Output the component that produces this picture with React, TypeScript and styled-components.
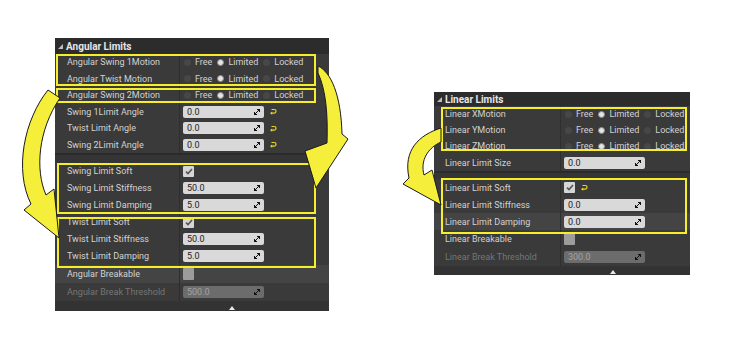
import styled, { createGlobalStyle } from 'styled-components';

const GlobalStyle = createGlobalStyle`
  html, body { margin: 0; padding: 0; background: #ffffff; }
  body { font-family: Roboto, 'Liberation Sans', sans-serif; }
`;

const Page = styled.div`
  position: relative;
  width: 746px;
  height: 346px;
  display: flex;
  align-items: flex-start;
  overflow: hidden;
`;

const Panel = styled.div<{ $top: number; $left: number; $width: number; $labelW: number }>`
  margin: ${(p) => p.$top}px 0 0 ${(p) => p.$left}px;
  width: ${(p) => p.$width}px;
  background: #3a3a3a;
  display: flex;
  flex-direction: column;
  --label-w: ${(p) => p.$labelW}px;
`;

const Header = styled.div<{ $h: number }>`
  height: ${(p) => p.$h}px;
  background: #2c2c2c;
  color: #e6e6e6;
  font-size: 10px;
  font-weight: 700;
  display: flex;
  align-items: center;
  gap: 3px;
  padding-left: 3px;
`;

const Caret = styled.span`
  width: 0;
  height: 0;
  border-left: 5px solid transparent;
  border-bottom: 5px solid #bdbdbd;
  margin-top: 1px;
`;

// yellow annotation box drawn over a group of rows
const Group = styled.div<{ $inset: string }>`
  position: relative;
  &::after {
    content: '';
    position: absolute;
    inset: ${(p) => p.$inset};
    border: 2px solid #f5ee2c;
    pointer-events: none;
    z-index: 2;
  }
`;

const Row = styled.div<{ $h: number; $tone?: 'base' | 'light' }>`
  height: ${(p) => p.$h}px;
  display: grid;
  grid-template-columns: var(--label-w) 1fr;
  background: ${(p) => (p.$tone === 'light' ? '#444444' : '#3a3a3a')};
`;

const Label = styled.div<{ $pad: number; $disabled?: boolean }>`
  display: flex;
  align-items: center;
  padding-left: ${(p) => p.$pad}px;
  font-size: 9px;
  color: ${(p) => (p.$disabled ? '#767676' : '#d2d2d2')};
  border-right: 1px solid #2e2e2e;
  white-space: nowrap;
  overflow: hidden;
`;

const Value = styled.div`
  display: flex;
  align-items: center;
  padding-left: 3px;
  gap: 6px;
`;

const NumberBox = styled.div<{ $disabled?: boolean }>`
  width: 81px;
  height: 12px;
  box-sizing: border-box;
  border-radius: 2px;
  background: ${(p) => (p.$disabled ? '#6c6c6c' : '#d9d9d9')};
  color: ${(p) => (p.$disabled ? '#a3a3a3' : '#1e1e1e')};
  font-size: 9px;
  display: flex;
  align-items: center;
  justify-content: space-between;
  padding: 0 4px 0 4px;
`;

const CheckBox = styled.div<{ $empty?: boolean }>`
  width: 11px;
  height: ${(p) => (p.$empty ? 12 : 11)}px;
  border-radius: 1px;
  background: ${(p) => (p.$empty ? '#9c9c9c' : '#d6d6d6')};
  display: flex;
  align-items: center;
  justify-content: center;
`;

const RadioGroup = styled.div`
  display: flex;
  align-items: center;
  padding-left: 1px;
  font-size: 9px;
  color: #d2d2d2;
`;

const RadioOption = styled.div`
  display: flex;
  align-items: center;
  gap: 4px;
  margin-right: 5px;
`;

const Dot = styled.span<{ $on?: boolean }>`
  width: 7px;
  height: 7px;
  border-radius: 50%;
  box-sizing: border-box;
  background: ${(p) => (p.$on ? '#e4e4e4' : '#474747')};
  border: ${(p) => (p.$on ? '1px solid #8a8a8a' : 'none')};
`;

const Separator = styled.div<{ $h: number }>`
  height: ${(p) => p.$h}px;
  background: #353535;
  border-top: 2px solid #2b2b2b;
  box-sizing: border-box;
`;

const Footer = styled.div<{ $h: number }>`
  height: ${(p) => p.$h}px;
  display: grid;
  grid-template-columns: var(--label-w) 1fr;
  background: #333333;
  align-items: end;
`;

const Notch = styled.span`
  margin-left: 49px;
  width: 0;
  height: 0;
  border-left: 3.5px solid transparent;
  border-right: 3.5px solid transparent;
  border-bottom: 4px solid #e8e8e8;
  margin-bottom: 1px;
`;

const Overlay = styled.svg`
  position: absolute;
  left: 0;
  top: 0;
  pointer-events: none;
  z-index: 3;
`;

const SpinIcon = () => (
  <svg width='6' height='6' viewBox='0 0 6 6'>
    <path d='M3 0H6V3Z M0 3V6H3Z M1.6 4.4L4.4 1.6' stroke='#111' strokeWidth='1' fill='#111' />
  </svg>
);

const ResetIcon = () => (
  <svg width='7' height='7' viewBox='0 0 7 7'>
    <path d='M1.5 1.5H4.2A1.8 1.8 0 0 1 4.2 5.2H1' stroke='#e9d523' strokeWidth='1.2' fill='none' />
    <path d='M0 5.2L2.2 3.6V6.8Z' fill='#e9d523' />
  </svg>
);

const CheckMark = () => (
  <svg width='8' height='7' viewBox='0 0 8 7'>
    <path d='M1 3.6L3 5.6L7 1' stroke='#555' strokeWidth='1.6' fill='none' />
  </svg>
);

type Field =
  | { kind: 'motion'; label: string }
  | { kind: 'number'; label: string; value: string; reset?: boolean; disabled?: boolean }
  | { kind: 'check'; label: string; checked: boolean; reset?: boolean };

const FieldRow = (props: { field: Field; h: number; pad: number; tone?: 'base' | 'light' }) => {
  const { field, h, pad, tone } = props;
  const disabled = field.kind === 'number' && field.disabled;
  return (
    <Row $h={h} $tone={tone}>
      <Label $pad={pad} $disabled={disabled}>
        {field.label}
      </Label>
      <Value>
        {field.kind === 'motion' && (
          <RadioGroup>
            {['Free', 'Limited', 'Locked'].map((opt) => (
              <RadioOption key={opt}>
                <Dot $on={opt === 'Limited'} />
                {opt}
              </RadioOption>
            ))}
          </RadioGroup>
        )}
        {field.kind === 'number' && (
          <>
            <NumberBox $disabled={field.disabled}>
              {field.value}
              <SpinIcon />
            </NumberBox>
            {field.reset && <ResetIcon />}
          </>
        )}
        {field.kind === 'check' && (
          <>
            <CheckBox $empty={!field.checked}>{field.checked && <CheckMark />}</CheckBox>
            {field.reset && <ResetIcon />}
          </>
        )}
      </Value>
    </Row>
  );
};

const App = () => {
  return (
    <Page>
      <GlobalStyle />
      <Panel $top={38} $left={55} $width={274} $labelW={125}>
        <Header $h={16}>
          <Caret />
          Angular Limits
        </Header>
        <Group $inset='0 13px 1px 1px'>
          <FieldRow h={16.5} pad={12} field={{ kind: 'motion', label: 'Angular Swing 1Motion' }} />
          <FieldRow h={16.5} pad={12} field={{ kind: 'motion', label: 'Angular Twist Motion' }} />
        </Group>
        <Group $inset='1px 13px 1px 1px'>
          <FieldRow h={16.5} pad={12} field={{ kind: 'motion', label: 'Angular Swing 2Motion' }} />
        </Group>
        <FieldRow h={16.5} pad={12} field={{ kind: 'number', label: 'Swing 1Limit Angle', value: '0.0', reset: true }} />
        <FieldRow h={16.5} pad={12} field={{ kind: 'number', label: 'Twist Limit Angle', value: '0.0', reset: true }} />
        <FieldRow h={16.5} pad={12} field={{ kind: 'number', label: 'Swing 2Limit Angle', value: '0.0', reset: true }} />
        <Separator $h={9.5} />
        <Group $inset='0 13px 0 2px'>
          <FieldRow h={17} pad={12} field={{ kind: 'check', label: 'Swing Limit Soft', checked: true }} />
          <FieldRow h={17} pad={12} field={{ kind: 'number', label: 'Swing Limit Stiffness', value: '50.0' }} />
          <FieldRow h={17} pad={12} field={{ kind: 'number', label: 'Swing Limit Damping', value: '5.0' }} />
        </Group>
        <Group $inset='3px 13px -3px 2px'>
          <FieldRow h={17} pad={12} field={{ kind: 'check', label: 'Twist Limit Soft', checked: true }} />
          <FieldRow h={17} pad={12} field={{ kind: 'number', label: 'Twist Limit Stiffness', value: '50.0' }} />
          <FieldRow h={17} pad={12} field={{ kind: 'number', label: 'Twist Limit Damping', value: '5.0' }} />
        </Group>
        <FieldRow h={18} pad={12} tone='light' field={{ kind: 'check', label: 'Angular Breakable', checked: false }} />
        <FieldRow h={18} pad={12} field={{ kind: 'number', label: 'Angular Break Threshold', value: '500.0', disabled: true }} />
        <Footer $h={10}>
          <span />
          <Notch />
        </Footer>
      </Panel>

      <Panel $top={92} $left={105} $width={256} $labelW={127}>
        <Header $h={14}>
          <Caret />
          Linear Limits
        </Header>
        <Group $inset='1px 3px 3px 7px'>
          <FieldRow h={16} pad={11} field={{ kind: 'motion', label: 'Linear XMotion' }} />
          <FieldRow h={16} pad={11} field={{ kind: 'motion', label: 'Linear YMotion' }} />
          <FieldRow h={16} pad={11} field={{ kind: 'motion', label: 'Linear ZMotion' }} />
        </Group>
        <FieldRow h={17} pad={11} field={{ kind: 'number', label: 'Linear Limit Size', value: '0.0' }} />
        <Separator $h={8} />
        <Group $inset='-1px 3px -4px 7px'>
          <FieldRow h={17} pad={11} field={{ kind: 'check', label: 'Linear Limit Soft', checked: true, reset: true }} />
          <FieldRow h={17} pad={11} field={{ kind: 'number', label: 'Linear Limit Stiffness', value: '0.0' }} />
          <FieldRow h={17} pad={11} tone='light' field={{ kind: 'number', label: 'Linear Limit Damping', value: '0.0' }} />
        </Group>
        <FieldRow h={18} pad={11} field={{ kind: 'check', label: 'Linear Breakable', checked: false }} />
        <FieldRow h={18} pad={11} field={{ kind: 'number', label: 'Linear Break Threshold', value: '300.0', disabled: true }} />
        <Footer $h={9}>
          <span />
          <Notch />
        </Footer>
      </Panel>

      <Overlay width='746' height='346' viewBox='0 0 746 346'>
        <g fill='#f5ee3a' stroke='#1a1a1a' strokeWidth='1' strokeLinejoin='round'>
          <path d='M48 90 C24 120 14 170 31 204 L24 210 L59 238 L54 189 L46 195 C35 170 38 130 60 98 Z' />
          <path d='M318 66 C331 72 341 95 342 134 L348 139 L316 188 L305 151 L327 143 C328 115 326 90 318 73 Z' />
          <path d='M441 128 C419 135 403 150 409 178 L403 184 L441 205 L432 170 L424 175 C420 160 428 148 441 142 Z' />
        </g>
      </Overlay>
    </Page>
  );
};

export default App;
